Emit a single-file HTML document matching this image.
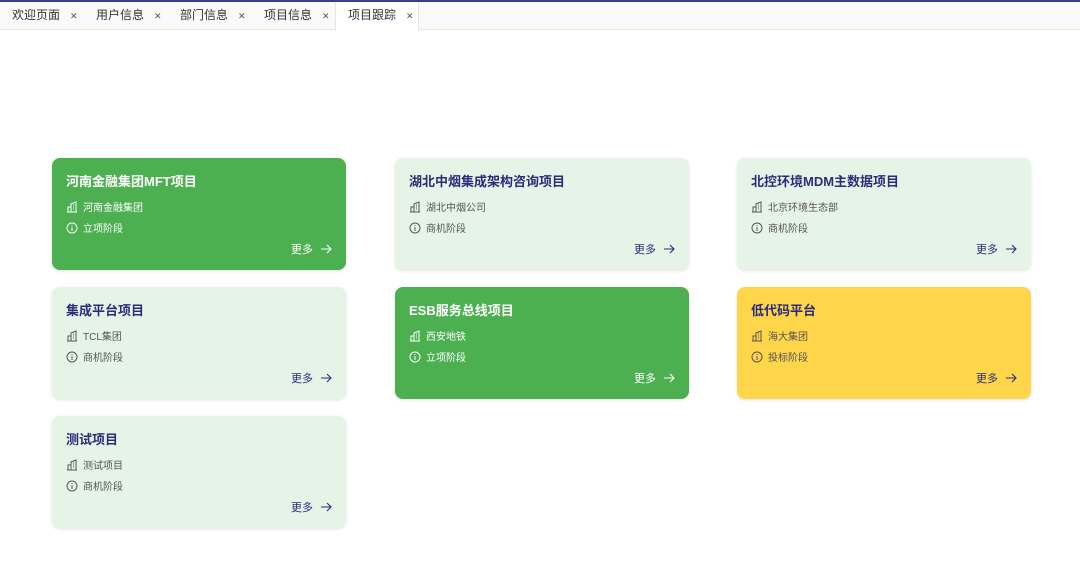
<!DOCTYPE html>
<html><head><meta charset="utf-8"><style>
*{box-sizing:border-box;margin:0;padding:0}
body{width:1080px;height:566px;background:#fff;font-family:"Liberation Sans","Noto Sans CJK SC",sans-serif;position:relative;overflow:hidden}
.top{position:absolute;left:0;top:0;width:1080px;height:2px;background:#3b3f8f}
.tabs{position:absolute;left:0;top:2px;width:1080px;height:28px;border-bottom:1px solid #e6e6e6;background:#fafafa}
.tab{position:absolute;top:0;height:28px;line-height:27px;font-size:12px;color:#333;padding-left:12px}
.tab .x{font-size:9px;color:#555;margin-left:10px}
.tab.act{background:#fff;border-left:1px solid #e6e6e6;border-right:1px solid #e6e6e6;height:29px}
.card{position:absolute;width:294px;height:112px;border-radius:8px;background:#e6f4e8;box-shadow:0 1px 3px rgba(0,0,0,.12);color:#555}
.card.g{background:#4caf50;color:#fff}
.card.y{background:#ffd54a;color:#555}
.t{position:absolute;left:14px;top:13px;font-size:13px;font-weight:bold;color:#2a2d7c}
.g .t{color:#fff}
.r{position:absolute;left:14px;font-size:10px;display:flex;align-items:center}
.r svg{margin-right:5px}
.r1{top:41px}.r2{top:62px}
.m{position:absolute;right:14px;top:83px;font-size:11px;color:#2a2d7c;display:flex;align-items:center}
.m svg{margin-left:7px}
.g .m{color:#fff}
</style></head><body>
<div class="top"></div>
<div class="tabs">
<div class="tab" style="left:0">欢迎页面<span class="x">✕</span></div>
<div class="tab" style="left:84px">用户信息<span class="x">✕</span></div>
<div class="tab" style="left:168px">部门信息<span class="x">✕</span></div>
<div class="tab" style="left:252px">项目信息<span class="x">✕</span></div>
<div class="tab act" style="left:335px;width:84px">项目跟踪<span class="x">✕</span></div>
</div>
<svg width="0" height="0" style="position:absolute"><defs>
<symbol id="b" viewBox="0 0 12 12"><path d="M1 11h10M2 11V6h3v5M5 11V3l5-2v10M7 4h1M7 6h1M7 8h1" fill="none" stroke="currentColor" stroke-width="1"/></symbol>
<symbol id="i" viewBox="0 0 12 12"><circle cx="6" cy="6" r="5" fill="none" stroke="currentColor"/><path d="M6 5v4M6 3v1" stroke="currentColor"/></symbol>
<symbol id="a" viewBox="0 0 12 12"><path d="M1 6h10M7 2l4 4-4 4" fill="none" stroke="currentColor" stroke-width="1.1"/></symbol>
</defs></svg>
<div class="card g" style="left:52px;top:158px"><div class="t">河南金融集团MFT项目</div><div class="r r1"><svg width="12" height="12"><use href="#b"/></svg>河南金融集团</div><div class="r r2"><svg width="12" height="12"><use href="#i"/></svg>立项阶段</div><div class="m">更多<svg width="12" height="12"><use href="#a"/></svg></div></div>
<div class="card" style="left:395px;top:158px"><div class="t">湖北中烟集成架构咨询项目</div><div class="r r1"><svg width="12" height="12"><use href="#b"/></svg>湖北中烟公司</div><div class="r r2"><svg width="12" height="12"><use href="#i"/></svg>商机阶段</div><div class="m">更多<svg width="12" height="12"><use href="#a"/></svg></div></div>
<div class="card" style="left:737px;top:158px"><div class="t">北控环境MDM主数据项目</div><div class="r r1"><svg width="12" height="12"><use href="#b"/></svg>北京环境生态部</div><div class="r r2"><svg width="12" height="12"><use href="#i"/></svg>商机阶段</div><div class="m">更多<svg width="12" height="12"><use href="#a"/></svg></div></div>
<div class="card" style="left:52px;top:287px"><div class="t">集成平台项目</div><div class="r r1"><svg width="12" height="12"><use href="#b"/></svg>TCL集团</div><div class="r r2"><svg width="12" height="12"><use href="#i"/></svg>商机阶段</div><div class="m">更多<svg width="12" height="12"><use href="#a"/></svg></div></div>
<div class="card g" style="left:395px;top:287px"><div class="t">ESB服务总线项目</div><div class="r r1"><svg width="12" height="12"><use href="#b"/></svg>西安地铁</div><div class="r r2"><svg width="12" height="12"><use href="#i"/></svg>立项阶段</div><div class="m">更多<svg width="12" height="12"><use href="#a"/></svg></div></div>
<div class="card y" style="left:737px;top:287px"><div class="t">低代码平台</div><div class="r r1"><svg width="12" height="12"><use href="#b"/></svg>海大集团</div><div class="r r2"><svg width="12" height="12"><use href="#i"/></svg>投标阶段</div><div class="m">更多<svg width="12" height="12"><use href="#a"/></svg></div></div>
<div class="card" style="left:52px;top:416px"><div class="t">测试项目</div><div class="r r1"><svg width="12" height="12"><use href="#b"/></svg>测试项目</div><div class="r r2"><svg width="12" height="12"><use href="#i"/></svg>商机阶段</div><div class="m">更多<svg width="12" height="12"><use href="#a"/></svg></div></div>
</body></html>
